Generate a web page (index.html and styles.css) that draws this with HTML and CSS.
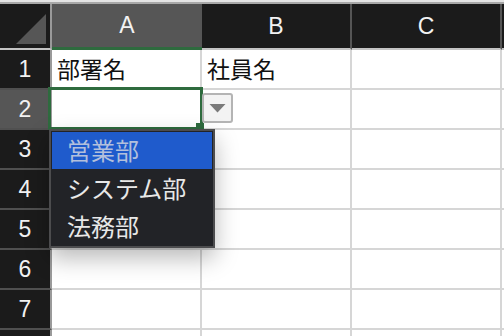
FILE: index.html
```html
<!DOCTYPE html>
<html lang="ja">
<head>
    <meta charset="UTF-8">
    <title>部署名 - 入力規則</title>
    <link rel="stylesheet" href="styles.css">
</head>
<body>
    <div class="topbar"></div>
    <div class="sheet">
        <div class="corner"><span class="tri"></span></div>
        <div class="colhead active">A</div>
        <div class="colhead">B</div>
        <div class="colhead">C</div>
        <div class="colhead"></div>

        <div class="rowhead">1</div>
        <div class="cell">部署名</div>
        <div class="cell">社員名</div>
        <div class="cell"></div>
        <div class="cell"></div>

        <div class="rowhead active">2</div>
        <div class="cell"></div>
        <div class="cell"></div>
        <div class="cell"></div>
        <div class="cell"></div>

        <div class="rowhead">3</div>
        <div class="cell"></div>
        <div class="cell"></div>
        <div class="cell"></div>
        <div class="cell"></div>

        <div class="rowhead">4</div>
        <div class="cell"></div>
        <div class="cell"></div>
        <div class="cell"></div>
        <div class="cell"></div>

        <div class="rowhead">5</div>
        <div class="cell"></div>
        <div class="cell"></div>
        <div class="cell"></div>
        <div class="cell"></div>

        <div class="rowhead">6</div>
        <div class="cell"></div>
        <div class="cell"></div>
        <div class="cell"></div>
        <div class="cell"></div>

        <div class="rowhead">7</div>
        <div class="cell"></div>
        <div class="cell"></div>
        <div class="cell"></div>
        <div class="cell"></div>

        <!-- row 8 only peeks in at the bottom edge -->
        <div class="rowhead"></div>
        <div class="cell"></div>
        <div class="cell"></div>
        <div class="cell"></div>
        <div class="cell"></div>

        <!-- selected cell A2 with its list -->
        <div class="selection"></div>
        <div class="fill-handle"></div>
        <button class="dd-btn"><span class="arrow"></span></button>
        <ul class="dd-list">
            <li class="current">営業部</li>
            <li>システム部</li>
            <li>法務部</li>
        </ul>
    </div>
</body>
</html>
```

FILE: styles.css
```css
body {
    margin: 0;
    background-color: #ffffff;
    font-family: "Liberation Sans", "Noto Sans CJK JP", sans-serif;
    overflow: hidden;
}
.topbar {
    height: 2px;
    border-top: 2px solid #e4e4e4;
    background-color: #a8a8a8;
}
.sheet {
    position: relative;
    display: grid;
    grid-template-columns: 52px 150px 150px 150px 1fr;
    grid-template-rows: 46px;
    grid-auto-rows: 40px;
}
.sheet > div {
    box-sizing: border-box;
}
.corner {
    display: flex;
    align-items: flex-end;
    justify-content: flex-end;
    padding: 0 4px 4px 0;
    background-color: #1b1b1b;
    border-right: 2px solid #9a9a9a;
    border-bottom: 2px solid #c4c4c4;
}
.tri {
    width: 30px;
    height: 30px;
    background-color: #565656;
    clip-path: polygon(100% 0, 100% 100%, 0 100%);
}
.colhead {
    display: flex;
    align-items: center;
    justify-content: center;
    background-color: #1b1b1b;
    color: #f2f2f2;
    font-size: 23px;
    border-right: 2px solid #555555;
    border-bottom: 2px solid #c4c4c4;
}
.colhead.active {
    background-color: #565656;
    border-right: none;
    border-bottom: 3px solid #2e6b3e;
}
.rowhead {
    display: flex;
    align-items: center;
    justify-content: center;
    background-color: #1b1b1b;
    color: #f2f2f2;
    font-size: 23px;
    border-right: 2px solid #9a9a9a;
    border-bottom: 2px solid #505050;
}
.rowhead.active {
    background-color: #565656;
}
.cell {
    display: flex;
    align-items: center;
    padding: 0 0 2px 5px;
    font-family: "Noto Sans CJK JP", sans-serif;
    font-size: 23px;
    color: #111111;
    border-right: 2px solid #d6d6d6;
    border-bottom: 2px solid #d6d6d6;
}
.selection {
    position: absolute;
    left: 48px;
    top: 83px;
    width: 155px;
    height: 43px;
    box-sizing: border-box;
    border: 3px solid #2e6b3e;
}
.fill-handle {
    position: absolute;
    left: 196px;
    top: 119px;
    width: 8px;
    height: 8px;
    background-color: #2e6b3e;
}
.dd-btn {
    position: absolute;
    left: 202px;
    top: 89px;
    width: 31px;
    height: 30px;
    padding: 0;
    display: flex;
    align-items: center;
    justify-content: center;
    background-color: #f3f3f3;
    border: 2px solid #b4b4b4;
    border-radius: 3px;
}
.arrow {
    width: 17px;
    height: 9px;
    background-color: #7a7a7a;
    clip-path: polygon(0 0, 100% 0, 50% 100%);
}
.dd-list {
    position: absolute;
    left: 49px;
    top: 125px;
    width: 166px;
    margin: 0;
    padding: 1px;
    list-style: none;
    box-sizing: border-box;
    background-color: #222327;
    border: 2px solid #4c4c4e;
    box-shadow: 0 10px 22px rgba(0, 0, 0, 0.28);
    font-family: "Noto Sans CJK JP", sans-serif;
    font-size: 24px;
    color: #e8e8e8;
}
.dd-list li {
    height: 38px;
    line-height: 38px;
    padding-left: 15px;
}
.dd-list li.current {
    height: 37px;
    line-height: 36px;
    background-color: #1f5bcc;
    color: #b3c0dc;
}
```
